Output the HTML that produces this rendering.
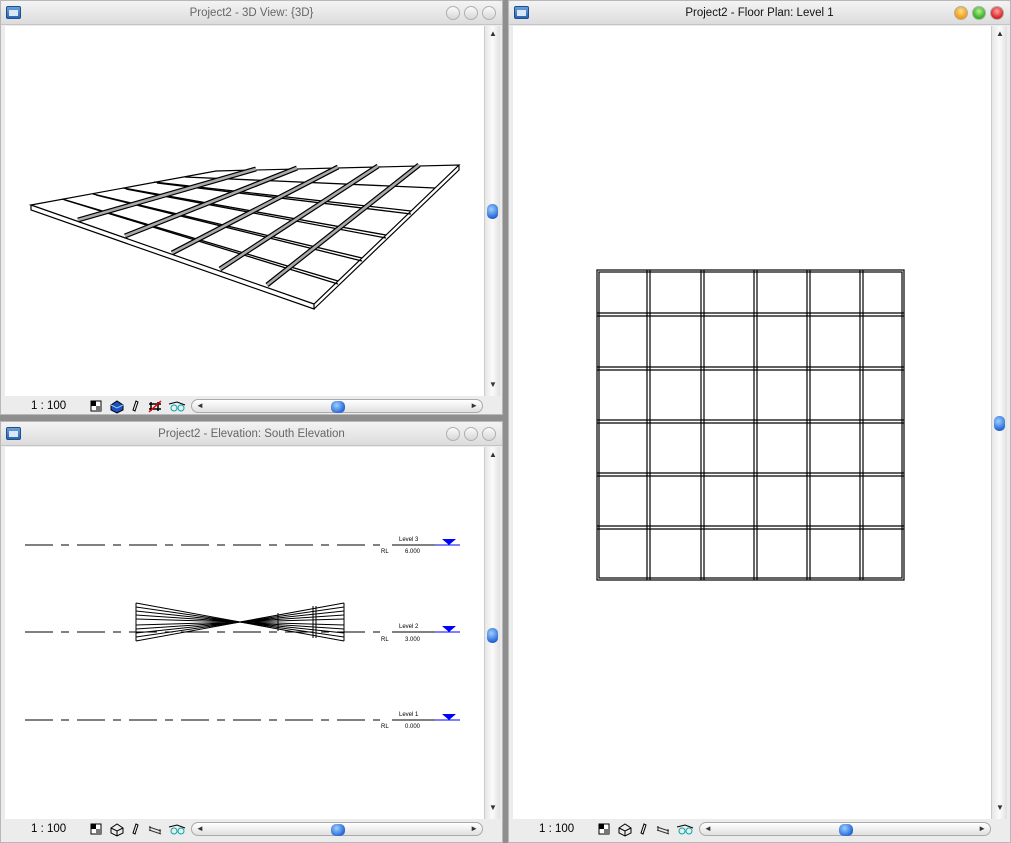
<!DOCTYPE html>
<html><head><style>
*{margin:0;padding:0;box-sizing:border-box}
body{width:1011px;height:843px;background:#8e8e8e;position:relative;overflow:hidden;font-family:"Liberation Sans",sans-serif}
.win{position:absolute;background:#ececec;border:1px solid #b8b8b8}
.title{position:absolute;left:0;right:0;top:0;height:24px;background:linear-gradient(#f4f4f4,#dcdcdc);border-bottom:1px solid #c4c4c4;font-size:11.5px;color:#666;text-align:center;line-height:24px;border-radius:5px 5px 0 0}
.title.act{color:#111}
.ico{position:absolute;left:5px;top:5px;width:15px;height:13px;background:linear-gradient(#6aa0d8,#2a64b0);border:1px solid #1e4e90;border-radius:2px}
.ico:after{content:"";position:absolute;left:2px;top:3px;width:9px;height:6px;background:#d8e8f8}
.btns{position:absolute;right:6px;top:5px}
.btns span{display:inline-block;width:14px;height:14px;border-radius:50%;margin-left:4px;background:linear-gradient(#fafafa,#d6d6d6);border:1px solid #b0b0b0}
.content{position:absolute;background:#fff;left:4px;top:25px}
.vs{position:absolute;top:25px;width:16px;background:linear-gradient(90deg,#e6e6e6,#fbfbfb,#e0e0e0);border-left:1px solid #ccc}
.thumbv{position:absolute;left:2px;width:11px;height:15px;border-radius:5px;background:radial-gradient(circle at 40% 35%,#9cd0ff,#2a6ad8 70%,#1a4aa0)}
.status{position:absolute;left:4px;height:20px;font-size:11.5px;color:#000}
.hs{position:absolute;top:3px;height:14px;border-radius:7px;background:linear-gradient(#fff,#e0e0e0);border:1px solid #aaa}
.thumbh{position:absolute;top:1px;width:14px;height:12px;border-radius:5px;background:radial-gradient(circle at 40% 35%,#9cd0ff,#2a6ad8 70%,#1a4aa0)}
.arr{position:absolute;font-size:8px;color:#333}
</style></head><body>

<!-- top-left window -->
<div class="win" style="left:0;top:0;width:503px;height:415px">
 <div class="title">Project2 - 3D View: {3D}</div><div class="ico"></div>
 <div class="btns"><span></span><span></span><span></span></div>
 <div class="content" style="width:479px;height:370px"></div>
 <div class="vs" style="left:483px;height:370px"><div class="arr" style="left:4px;top:3px">▲</div><div class="arr" style="left:4px;top:354px">▼</div><div class="thumbv" style="top:178px"></div></div>
 <div class="status" style="top:395px;width:495px">
  <span style="position:absolute;left:26px;top:4px">1 : 100</span>
  <svg style="position:absolute;left:84px;top:2px" width="100" height="16">
   <rect x="2" y="3" width="10" height="10" fill="#fff" stroke="#000"/><rect x="2" y="3" width="5" height="5" fill="#000"/><rect x="7" y="8" width="5" height="5" fill="#777"/>
   <path d="M22 7 L28 3 L34 7 L34 12 L28 15 L22 12Z" fill="#2050c0" stroke="#000"/><path d="M22 7 L28 10 L34 7" stroke="#8cf" fill="none"/>
   <path d="M44 12 L47 3 L49 4 L46 13Z" fill="none" stroke="#000"/>
   <path d="M62 4 V13 M69 4 V13 M60 6 H72 M60 11 H72" stroke="#000" stroke-width="1.5"/><path d="M60 14 L72 3" stroke="#e00" stroke-width="1.5"/>
   <circle cx="85" cy="10" r="3" fill="none" stroke="#0aa"/><circle cx="92" cy="10" r="3" fill="none" stroke="#0aa"/><path d="M80 6 L88 4 L96 7" stroke="#000" fill="none"/>
  </svg>
  <div class="hs" style="left:186px;width:292px"><div class="arr" style="left:4px;top:1px">◄</div><div class="arr" style="right:4px;top:1px">►</div><div class="thumbh" style="left:139px"></div></div>
 </div>
 <svg style="position:absolute;left:0;top:0" width="503" height="395">
  <path d="M30 204 L215 170 L458 164 L313 303Z M30 204 L30 209 L313 308 L313 303 M313 308 L458 169 L458 164" fill="#fff" stroke="#000" stroke-width="1.2"/>
  <g stroke="#000" stroke-width="1.3" fill="none">
   <path d="M61 198 L337 280 M92 193 L361 257 M122 187 L385 234 M153 181 L410 210 M184 176 L434 187"/>
   <path d="M64 199 L337 283 M95 194 L361 260 M125 188 L385 237 M156 182 L410 213"/>
  </g>
  <g stroke="#000" stroke-width="5" stroke-linecap="butt"><path d="M77 219 L255 168 M124 235 L296 167 M171 252 L337 166 M219 268 L377 165 M266 284 L418 164"/></g>
  <g stroke="#aaa" stroke-width="2.6"><path d="M77 219 L255 168 M124 235 L296 167 M171 252 L337 166 M219 268 L377 165 M266 284 L418 164"/></g>
 </svg>
</div>

<!-- bottom-left window -->
<div class="win" style="left:0;top:421px;width:503px;height:422px">
 <div class="title">Project2 - Elevation: South Elevation</div><div class="ico"></div>
 <div class="btns"><span></span><span></span><span></span></div>
 <div class="content" style="width:479px;height:372px"></div>
 <div class="vs" style="left:483px;height:372px"><div class="arr" style="left:4px;top:3px">▲</div><div class="arr" style="left:4px;top:356px">▼</div><div class="thumbv" style="top:181px"></div></div>
 <div class="status" style="top:397px;width:495px">
  <span style="position:absolute;left:26px;top:4px">1 : 100</span>
  <svg style="position:absolute;left:84px;top:2px" width="100" height="16">
   <rect x="2" y="3" width="10" height="10" fill="#fff" stroke="#000"/><rect x="2" y="3" width="5" height="5" fill="#000"/><rect x="7" y="8" width="5" height="5" fill="#777"/>
   <path d="M22 7 L28 3 L34 7 L34 12 L28 15 L22 12Z M22 7 L28 10 L34 7 M28 10 V15" fill="none" stroke="#000"/>
   <path d="M44 12 L47 3 L49 4 L46 13Z" fill="none" stroke="#000"/>
   <path d="M60 6 L72 10 M60 9 L72 13 M61 5 V10 M71 8 V13" stroke="#333" fill="none"/>
   <circle cx="85" cy="10" r="3" fill="none" stroke="#0aa"/><circle cx="92" cy="10" r="3" fill="none" stroke="#0aa"/><path d="M80 6 L88 4 L96 7" stroke="#000" fill="none"/>
  </svg>
  <div class="hs" style="left:186px;width:292px"><div class="arr" style="left:4px;top:1px">◄</div><div class="arr" style="right:4px;top:1px">►</div><div class="thumbh" style="left:139px"></div></div>
 </div>
</div>
<svg style="position:absolute;left:0;top:421px" width="503" height="397" font-family="Liberation Sans" font-size="6">
 <g stroke="#000" stroke-width="1" fill="none">
  <path d="M25 124 H380" stroke-dasharray="28,8,8,8"/><path d="M25 211 H380" stroke-dasharray="28,8,8,8"/><path d="M25 299 H380" stroke-dasharray="28,8,8,8"/>
  <path d="M392 124 H435 M392 211 H435 M392 299 H435"/>
 </g>
 <g stroke="#00f"><path d="M435 124 H460 M435 211 H460 M435 299 H460"/></g>
 <g fill="#00f"><path d="M442 118 L456 118 L449 124Z M442 205 L456 205 L449 211Z M442 293 L456 293 L449 299Z"/></g>
 <g fill="#000"><text x="399" y="120">Level 3</text><text x="381" y="132">RL</text><text x="405" y="132">6.000</text>
 <text x="399" y="207">Level 2</text><text x="381" y="220">RL</text><text x="405" y="220">3.000</text>
 <text x="399" y="295">Level 1</text><text x="381" y="307">RL</text><text x="405" y="307">0.000</text></g>
 <g stroke="#000" fill="none" stroke-width="1">
  <path d="M136 182 L240 201 L344 182 M136 220 L240 201 L344 220 M136 182 V220 M344 182 V220"/>
  <path d="M136 186 L240 201 L344 186 M136 190 L240 201 L344 190 M136 194 L240 201 L344 194 M136 198 L240 201 L344 198 M136 204 L240 201 L344 204 M136 208 L240 201 L344 208 M136 212 L240 201 L344 212 M136 216 L240 201 L344 216"/>
  <path d="M313 185 V217 M316 185 V217 M278 192 V210"/>
 </g>
</svg>

<!-- right window -->
<div class="win" style="left:508px;top:0;width:503px;height:843px">
 <div class="title act">Project2 - Floor Plan: Level 1</div><div class="ico"></div>
 <div class="btns"><span style="background:radial-gradient(circle at 50% 35%,#ffe08a,#f09a10 70%)"></span><span style="background:radial-gradient(circle at 50% 35%,#b8f090,#30b020 70%)"></span><span style="background:radial-gradient(circle at 50% 35%,#ffa0a0,#d82020 70%)"></span></div>
 <div class="content" style="width:478px;height:793px"></div>
 <div class="vs" style="left:482px;height:793px"><div class="arr" style="left:4px;top:3px">▲</div><div class="arr" style="left:4px;top:777px">▼</div><div class="thumbv" style="top:390px"></div></div>
 <div class="status" style="top:818px;width:495px">
  <span style="position:absolute;left:26px;top:4px">1 : 100</span>
  <svg style="position:absolute;left:84px;top:2px" width="100" height="16">
   <rect x="2" y="3" width="10" height="10" fill="#fff" stroke="#000"/><rect x="2" y="3" width="5" height="5" fill="#000"/><rect x="7" y="8" width="5" height="5" fill="#777"/>
   <path d="M22 7 L28 3 L34 7 L34 12 L28 15 L22 12Z M22 7 L28 10 L34 7 M28 10 V15" fill="none" stroke="#000"/>
   <path d="M44 12 L47 3 L49 4 L46 13Z" fill="none" stroke="#000"/>
   <path d="M60 6 L72 10 M60 9 L72 13 M61 5 V10 M71 8 V13" stroke="#333" fill="none"/>
   <circle cx="85" cy="10" r="3" fill="none" stroke="#0aa"/><circle cx="92" cy="10" r="3" fill="none" stroke="#0aa"/><path d="M80 6 L88 4 L96 7" stroke="#000" fill="none"/>
  </svg>
  <div class="hs" style="left:186px;width:292px"><div class="arr" style="left:4px;top:1px">◄</div><div class="arr" style="right:4px;top:1px">►</div><div class="thumbh" style="left:139px"></div></div>
 </div>
</div>
<svg style="position:absolute;left:0;top:0" width="1011" height="843">
 <g fill="none" stroke="#000" stroke-width="1.2">
  <rect x="597" y="270" width="307" height="310"/><rect x="599" y="272" width="303" height="306"/>
  <path d="M647 270 V580 M650 270 V580 M701 270 V580 M704 270 V580 M754 270 V580 M757 270 V580 M807 270 V580 M810 270 V580 M860 270 V580 M863 270 V580"/>
  <path d="M597 313 H904 M597 316 H904 M597 367 H904 M597 370 H904 M597 420 H904 M597 423 H904 M597 473 H904 M597 476 H904 M597 526 H904 M597 529 H904"/>
 </g>
</svg>
</body></html>
